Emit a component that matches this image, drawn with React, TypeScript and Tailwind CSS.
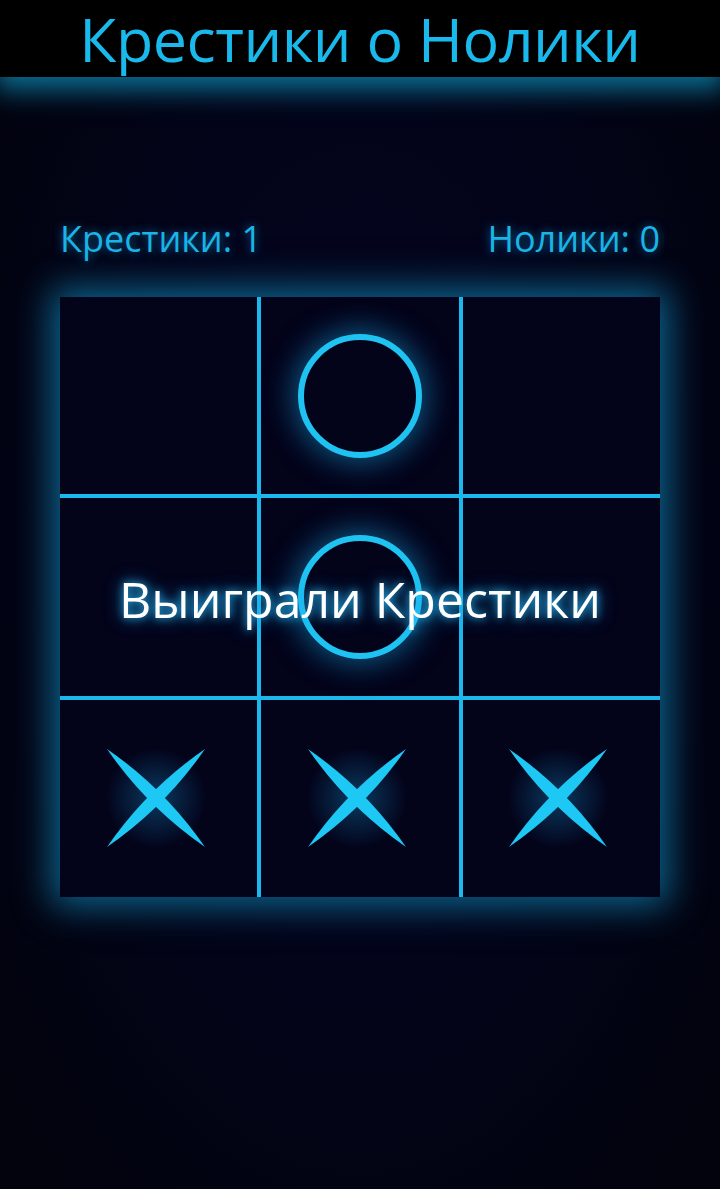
type Mark = "x" | "o" | null

const board: Mark[] = [null, "o", null, null, "o", null, "x", "x", "x"]

function Cross() {
  return (
    <div className="relative -ml-[6px] flex h-[100px] w-[100px] items-center justify-center">
      <div className="absolute h-[110px] w-[110px] rounded-full bg-[radial-gradient(circle,rgba(20,140,200,0.4)_0%,rgba(20,140,200,0)_65%)]" />
      <svg viewBox="0 0 100 100" className="relative h-[100px] w-[100px]">
        <path d="M1 1 Q59 41 99 99 Q41 59 1 1 Z" fill="#1ec8f5" />
        <path d="M99 1 Q59 59 1 99 Q41 41 99 1 Z" fill="#1ec8f5" />
      </svg>
    </div>
  )
}

function Nought() {
  return (
    <div className="h-[124px] w-[124px] rounded-full border-[6px] border-[#1ec3f2] bg-[#03031a] shadow-[0_0_28px_6px_rgba(16,140,200,0.55)]" />
  )
}

export default function App() {
  return (
    <div
      className="relative h-[1189px] w-[720px] overflow-hidden bg-[radial-gradient(ellipse_at_50%_45%,#050720_0%,#03041a_45%,#02030b_100%)]"
      style={{ fontFamily: '"Open Sans", "Noto Sans", sans-serif' }}
    >
      {/* title bar */}
      <header className="relative z-10 flex h-[77px] items-center justify-center bg-black shadow-[0_6px_26px_6px_rgba(12,125,165,0.9)]">
        <h1 className="text-[61px] font-normal leading-[72px] tracking-[-0.5px] text-[#1ab9ec]">
          Крестики о Нолики
        </h1>
      </header>

      {/* scores */}
      <div className="mt-[140px] flex justify-between px-[60px] text-[36px] leading-[44px] text-[#1ab4e6] [text-shadow:0_0_10px_rgba(20,150,220,0.7)]">
        <span>Крестики: 1</span>
        <span>Нолики: 0</span>
      </div>

      {/* board */}
      <div className="relative mx-[60px] mt-[36px] grid h-[600px] w-[600px] grid-cols-3 grid-rows-3 gap-[4px] bg-[#1ab8ec] shadow-[0_0_34px_8px_rgba(14,120,165,0.85)]">
        {board.map((cell, i) => (
          <div key={i} className="flex items-center justify-center bg-[#03031a]">
            {cell === "x" && <Cross />}
            {cell === "o" && <Nought />}
          </div>
        ))}
        <div className="absolute inset-0 flex items-center justify-center">
          <p className="pt-[4px] text-[50px] leading-none text-white [text-shadow:0_0_8px_rgba(40,190,255,0.95),0_0_18px_rgba(30,160,230,0.8)]">
            Выиграли Крестики
          </p>
        </div>
      </div>
    </div>
  )
}
